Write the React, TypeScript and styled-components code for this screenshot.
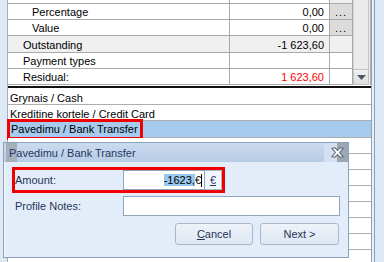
import React from 'react';
import styled, { createGlobalStyle } from 'styled-components';

const GlobalStyle = createGlobalStyle`
  html, body { margin: 0; padding: 0; background: #fff; }
  body { font-family: "Liberation Sans", Arial, sans-serif; font-size: 11px; }
`;

const Screen = styled.div`
  position: relative;
  width: 384px;
  height: 262px;
  overflow: hidden;
  display: flex;
  background: #fff;
`;

const LeftStrip = styled.div`
  width: 7px;
  flex: none;
  background: #dfe9f5;
  border-right: 1px solid #9fb1c8;
`;

const RightStrip = styled.div`
  flex: 1;
  background: #dfe9f5;
  border-left: 1px solid #8ea1ba;
  box-shadow: inset 2px 0 0 #e6eef8, inset 3px 0 0 #8ea1ba;
`;

const Center = styled.div`
  width: 363px;
  flex: none;
  display: flex;
  flex-direction: column;
`;

const Grid = styled.div`
  display: grid;
  grid-template-columns: 222px 100px 23px 18px;
  grid-template-rows: 4px 16px 16px 17px 16px 16px;
`;

const Cell = styled.div<{ $indent?: number; $align?: string; $shade?: boolean; $color?: string }>`
  box-sizing: border-box;
  border-right: 1px solid #a9a9a9;
  border-bottom: 1px solid #a9a9a9;
  padding: 1px 5px 0 ${p => p.$indent ?? 0}px;
  display: flex;
  align-items: center;
  justify-content: ${p => p.$align ?? 'flex-start'};
  background: ${p => (p.$shade ? '#f0f0f0' : '#fff')};
  color: ${p => p.$color ?? '#000'};
  white-space: nowrap;
  overflow: hidden;
`;

const DotsCell = styled(Cell)`
  background: ${p => (p.$shade ? '#dcdcdc' : '#f0f0f0')};
  padding: 0 0 0 5px;
  letter-spacing: 1px;
`;

const ScrollBar = styled.div`
  grid-column: 4;
  grid-row: 1 / span 6;
  display: flex;
  flex-direction: column;
  background: #ebebeb;
  border-right: 1px solid #b4b4b4;
  box-sizing: border-box;
  padding-right: 1px;
`;

const Track = styled.div`
  flex: 1;
  border-left: 1px solid #d4d4d4;
  border-right: 1px solid #c4c4c4;
`;

const ArrowButton = styled.div`
  height: 16px;
  box-sizing: border-box;
  border: 1px solid #c2c2c2;
  background: linear-gradient(#f2f2f2, #dedede);
  display: flex;
  align-items: center;
  justify-content: center;
`;

const Divider = styled.div`
  margin-top: 1px;
  height: 6px;
  box-sizing: border-box;
  border: 1px solid #111;
  background: #dce8f6;
`;

const List = styled.div`
  display: flex;
  flex-direction: column;
`;

const ListRow = styled.div<{ $selected?: boolean; $height?: number; $pad?: number }>`
  height: ${p => p.$height ?? 16}px;
  flex: none;
  box-sizing: border-box;
  border-bottom: 1px solid #adadad;
  padding: ${p => p.$pad ?? 1}px 0 0 2px;
  display: flex;
  align-items: center;
  background: ${p => (p.$selected ? '#a6cbef' : '#fff')};
  color: #000;
  white-space: nowrap;
`;

const Marked = styled.span`
  display: inline-block;
  padding: 1px 2px 1px 1px;
  line-height: 13px;
  outline: 3px solid #f00000;
`;

const Dialog = styled.div`
  position: absolute;
  left: 3px;
  top: 142px;
  width: 346px;
  height: 116px;
  box-sizing: border-box;
  border: 1px solid #8ba0bd;
  background: #e3edfa;
  display: flex;
  flex-direction: column;
`;

const TitleBar = styled.div`
  height: 19px;
  flex: none;
  display: flex;
  align-items: center;
  background:
    linear-gradient(to right, transparent 0 2px, #a6b0bc 2px 13px, transparent 13px),
    linear-gradient(#cbdbef, #b8cce6);
  color: #1e3a5f;
  padding-left: 5px;
`;

const Close = styled.div`
  margin-left: auto;
  width: 24px;
  height: 19px;
  background: linear-gradient(to right, #d4e1f1 0 13px, #9ca7b4 13px);
  display: flex;
  align-items: center;
  justify-content: center;
  padding-left: 3px;
  box-sizing: border-box;
`;

const Body = styled.div`
  flex: 1;
  padding: 8px 8px 0 11px;
  display: flex;
  flex-direction: column;
  box-shadow: inset 1px 0 0 #f4f8fd;
`;

const FieldRow = styled.div<{ $marked?: boolean }>`
  display: flex;
  align-items: stretch;
  height: 20px;
  width: ${p => (p.$marked ? '207px' : 'auto')};
  outline: ${p => (p.$marked ? '3px solid #f00000' : 'none')};
  & + & { margin-top: 6px; }
`;

const Label = styled.div`
  width: 108px;
  flex: none;
  display: flex;
  align-items: center;
  color: #1f3556;
`;

const Input = styled.div<{ $width: number }>`
  width: ${p => p.$width}px;
  box-sizing: border-box;
  border: 1px solid #8fa4bf;
  background: #fff;
  display: flex;
  align-items: center;
  justify-content: flex-end;
  padding-right: 2px;
  color: #000;
`;

const Selected = styled.span`
  background: #99c9ef;
`;

const Caret = styled.span`
  display: inline-block;
  width: 1px;
  height: 13px;
  background: #000;
`;

const Currency = styled.div`
  width: 17px;
  box-sizing: border-box;
  border: 1px solid #a9bbd1;
  border-left: none;
  background: #f3f7fc;
  display: flex;
  align-items: center;
  justify-content: center;
  color: #1e3a6a;
  text-decoration: underline;
`;

const Buttons = styled.div`
  margin-top: 7px;
  display: flex;
  justify-content: flex-end;
  gap: 7px;
  padding-right: 1px;
`;

const Button = styled.div<{ $width: number }>`
  width: ${p => p.$width}px;
  height: 22px;
  box-sizing: border-box;
  border: 1px solid #a8b8cc;
  border-radius: 3px;
  background: linear-gradient(#eef3f9, #dfe7f2);
  display: flex;
  align-items: center;
  justify-content: center;
  color: #1f3556;
  u { text-decoration: underline; }
`;

const rows = [
  { label: 'Percentage', indent: 24, value: '0,00', dots: true },
  { label: 'Value', indent: 24, value: '0,00', dots: true },
  { label: 'Outstanding', indent: 15, value: '-1 623,60', shade: true },
  { label: 'Payment types', indent: 15, value: '' },
  { label: 'Residual:', indent: 15, value: '1 623,60', red: true },
];

const CloseIcon = () => (
  <svg width="13" height="11" viewBox="0 0 13 11">
    <path
      d="M0.8 1.2 L4.2 0.8 L6.5 3.3 L8.8 0.8 L12.2 1.2 L8.6 5.5 L12.2 9.8 L8.8 10.2 L6.5 7.7 L4.2 10.2 L0.8 9.8 L4.4 5.5 Z"
      fill="#fbfcfe"
      stroke="#5f6a78"
      strokeWidth="1.1"
      strokeLinejoin="round"
    />
  </svg>
);

export default function App() {
  return (
    <>
      <GlobalStyle />
      <Screen>
        <LeftStrip />
        <Center>
          <Grid>
            <Cell />
            <Cell />
            <DotsCell />
            {rows.map(r => (
              <React.Fragment key={r.label}>
                <Cell $indent={r.indent} $shade={r.shade}>{r.label}</Cell>
                <Cell $align="flex-end" $shade={r.shade} $color={r.red ? '#ff0000' : '#000'}>
                  {r.value}
                </Cell>
                {r.dots ? <DotsCell $shade>...</DotsCell> : <Cell $shade={r.shade} />}
              </React.Fragment>
            ))}
            <ScrollBar>
              <Track />
              <ArrowButton>
                <svg width="9" height="5" viewBox="0 0 9 5">
                  <path d="M0 0 H9 L4.5 5 Z" fill="#4d5866" />
                </svg>
              </ArrowButton>
            </ScrollBar>
          </Grid>
          <Divider />
          <List>
            <ListRow $height={17} $pad={3}>Grynais / Cash</ListRow>
            <ListRow $height={16} $pad={2}>Kreditine kortele / Credit Card</ListRow>
            <ListRow $height={17} $pad={1} $selected>
              <Marked>Pavedimu / Bank Transfer</Marked>
            </ListRow>
            {Array.from({ length: 8 }).map((_, i) => (
              <ListRow key={i} />
            ))}
          </List>
        </Center>
        <RightStrip />

        <Dialog>
          <TitleBar>
            Pavedimu / Bank Transfer
            <Close>
              <CloseIcon />
            </Close>
          </TitleBar>
          <Body>
            <FieldRow $marked>
              <Label>Amount:</Label>
              <Input $width={82}>
                <Selected>-1623,</Selected>€<Caret />
              </Input>
              <Currency>€</Currency>
            </FieldRow>
            <FieldRow>
              <Label>Profile Notes:</Label>
              <Input $width={217} />
            </FieldRow>
            <Buttons>
              <Button $width={78}>
                <span><u>C</u>ancel</span>
              </Button>
              <Button $width={79}>Next &gt;</Button>
            </Buttons>
          </Body>
        </Dialog>
      </Screen>
    </>
  );
}
